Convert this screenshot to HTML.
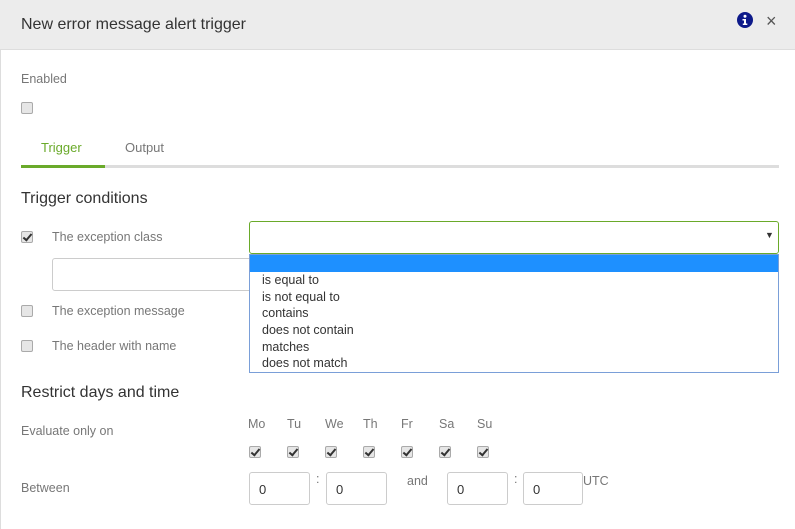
<!DOCTYPE html>
<html><head><style>
*{box-sizing:border-box;margin:0;padding:0}
body{width:795px;height:529px;overflow:hidden;background:#fff;font-family:"Liberation Sans",sans-serif;position:relative;color:#333}
.a{position:absolute;white-space:nowrap}
.hdr{position:absolute;left:0;top:0;width:795px;height:50px;background:#ececec;border-bottom:1px solid #ddd}
.lb{font-size:12.5px;color:#777}
.cb{position:absolute;width:12px;height:12px;border:1px solid #aaa;border-radius:2px;background:#e6e6e6}
.cb.k::after{content:"";position:absolute;left:3px;top:0px;width:3px;height:7px;border:solid #333;border-width:0 2px 2px 0;transform:rotate(40deg)}
.in{position:absolute;border:1px solid #ccc;border-radius:3px;background:#fff;font-size:13px;padding:9px 0 0 9px;height:33px;color:#333}
.dd div{height:16.7px;font-size:12.5px;padding-left:12px;line-height:16px}
</style></head><body>
<div class="a" style="left:0;top:50px;width:1px;height:479px;background:#ddd"></div>
<div class="hdr"></div>
<div class="a" style="left:21px;top:16px;font-size:16px;color:#333">New error message alert trigger</div>
<svg class="a" style="left:737px;top:12px" width="16" height="16" viewBox="0 0 16 16"><circle cx="8" cy="8" r="8" fill="#0d1a8a"/><circle cx="8" cy="4.3" r="1.5" fill="#fff"/><path d="M5.5 7h3.5v4.5h1.3v1.5H5.8v-1.5h1.2V8.5H5.5z" fill="#fff"/></svg>
<div class="a" style="left:766px;top:11px;font-size:18px;color:#555">×</div>
<div class="a lb" style="left:21px;top:72px">Enabled</div>
<div class="cb" style="left:21px;top:102px"></div>
<div class="a" style="left:41px;top:140px;font-size:13px;color:#6aaa2a">Trigger</div>
<div class="a" style="left:125px;top:140px;font-size:13px;color:#777">Output</div>
<div class="a" style="left:21px;top:165px;width:758px;height:3px;background:#ddd"></div>
<div class="a" style="left:21px;top:165px;width:84px;height:3px;background:#6aaa2a"></div>
<div class="a" style="left:21px;top:190px;font-size:16px;color:#333">Trigger conditions</div>
<div class="cb k" style="left:21px;top:231px"></div>
<div class="a lb" style="left:52px;top:230px">The exception class</div>
<div class="a" style="left:249px;top:221px;width:530px;height:33px;border:1px solid #6aaa2a;border-radius:3px"></div>
<div class="a" style="left:765px;top:230px;font-size:9px;color:#333">▼</div>
<div class="in" style="left:52px;top:258px;width:200px"></div>
<div class="cb" style="left:21px;top:305px"></div>
<div class="a lb" style="left:52px;top:304px">The exception message</div>
<div class="cb" style="left:21px;top:340px"></div>
<div class="a lb" style="left:52px;top:339px">The header with name</div>
<div class="a dd" style="left:249px;top:254px;width:530px;height:119px;border:1px solid #7a9fd8;background:#fff">
<div style="background:#1e90ff;height:17px"></div>
<div>is equal to</div><div>is not equal to</div><div>contains</div><div>does not contain</div><div>matches</div><div>does not match</div>
</div>
<div class="a" style="left:21px;top:384px;font-size:16px;color:#333">Restrict days and time</div>
<div class="a lb" style="left:21px;top:424px">Evaluate only on</div>
<div class="a lb" style="left:248px;top:417px">Mo</div>
<div class="a lb" style="left:287px;top:417px">Tu</div>
<div class="a lb" style="left:325px;top:417px">We</div>
<div class="a lb" style="left:363px;top:417px">Th</div>
<div class="a lb" style="left:401px;top:417px">Fr</div>
<div class="a lb" style="left:439px;top:417px">Sa</div>
<div class="a lb" style="left:477px;top:417px">Su</div>
<div class="cb k" style="left:249px;top:446px"></div>
<div class="cb k" style="left:287px;top:446px"></div>
<div class="cb k" style="left:325px;top:446px"></div>
<div class="cb k" style="left:363px;top:446px"></div>
<div class="cb k" style="left:401px;top:446px"></div>
<div class="cb k" style="left:439px;top:446px"></div>
<div class="cb k" style="left:477px;top:446px"></div>
<div class="a lb" style="left:21px;top:481px">Between</div>
<div class="in" style="left:249px;top:472px;width:61px">0</div>
<div class="a lb" style="left:316px;top:472px">:</div>
<div class="in" style="left:326px;top:472px;width:61px">0</div>
<div class="a lb" style="left:407px;top:474px">and</div>
<div class="in" style="left:447px;top:472px;width:61px">0</div>
<div class="a lb" style="left:514px;top:472px">:</div>
<div class="in" style="left:523px;top:472px;width:60px">0</div>
<div class="a lb" style="left:583px;top:474px">UTC</div>
</body></html>
